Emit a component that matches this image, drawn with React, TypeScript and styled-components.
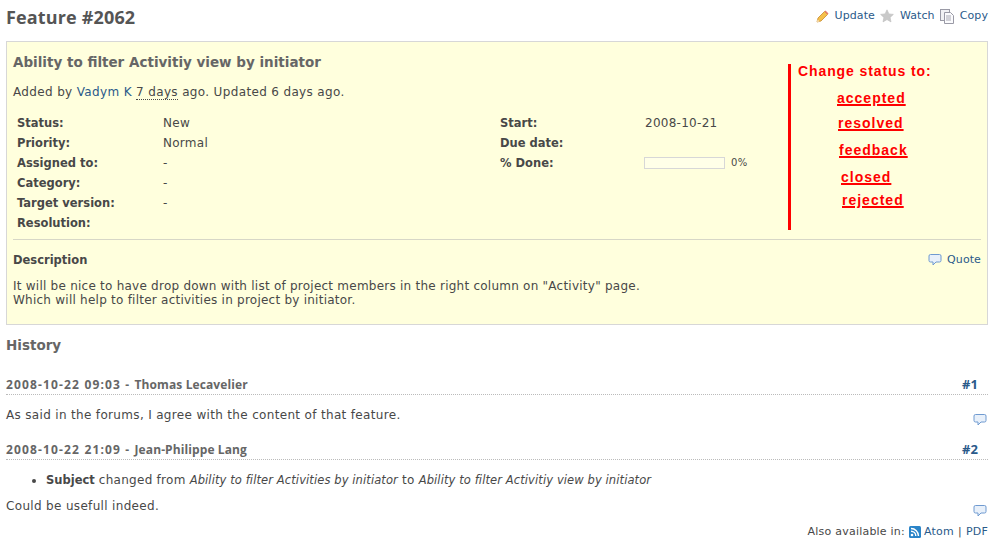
import React from "react";
import styled, { createGlobalStyle } from "styled-components";

const Global = createGlobalStyle`
  html, body { margin: 0; padding: 0; background: #fff; }
  body { font-family: "DejaVu Sans", Verdana, sans-serif; font-size: 12px; letter-spacing: 0.27px; color: #484848; line-height: 14px; }
  a { color: #2a5a8a; text-decoration: none; }
`;

const Page = styled.div`
  width: 998px;
  height: 542px;
  box-sizing: border-box;
  padding: 0 10px 0 6px;
  overflow: hidden;
`;
const TitleRow = styled.div`
  display: flex;
  justify-content: space-between;
  height: 41px;
`;
const Title = styled.h2`
  margin: 6px 0 0;
  font: bold 18px/23px "Open Sans", "DejaVu Sans", sans-serif;
  letter-spacing: 0.15px;
  color: #555;
`;
const Actions = styled.div`
  display: flex;
  align-items: center;
  height: 14px;
  margin-top: 9px;
  font-size: 11px;
  letter-spacing: 0.1px;
`;
const ActionLink = styled.a`
  display: flex;
  align-items: center;
  gap: 6px;
  margin-left: 5px;
`;
const IssueBox = styled.div`
  position: relative;
  box-sizing: border-box;
  height: 284px;
  background: #ffffdd;
  border: 1px solid #d7d7d7;
  padding: 0 6px;
`;
const Subject = styled.h3`
  margin: 12px 0 0;
  font: bold 13.5px/16px "DejaVu Sans", sans-serif;
  color: #666;
  letter-spacing: 0;
`;
const Author = styled.p`
  margin: 15px 0 0;
  height: 14px;
  letter-spacing: 0.35px;
`;
const Abbr = styled.span`
  border-bottom: 1px dotted #484848;
`;
const Attributes = styled.div`
  display: grid;
  grid-template-columns: 146px 337px 145px 1fr;
  grid-auto-rows: 20px;
  margin: 14px 0 0 4px;
  width: 760px;
  align-items: center;
`;
const Label = styled.span`
  font-weight: bold;
  font-size: 11.5px;
  letter-spacing: 0;
  white-space: nowrap;
`;
const Value = styled.span`
  white-space: nowrap;
`;
const ProgressCell = styled.span`
  display: flex;
  align-items: center;
  gap: 6px;
  margin-left: -1px;
  font-size: 10px;
`;
const Progress = styled.span`
  box-sizing: border-box;
  width: 81px;
  height: 12px;
  border: 1px solid #d7d7d7;
  background: #ffffe8;
`;
const Rule = styled.hr`
  border: 0;
  height: 1px;
  background: #d7d7c7;
  margin: 6px 0 0;
`;
const DescHead = styled.div`
  display: flex;
  justify-content: space-between;
  align-items: center;
  margin-top: 13px;
  height: 14px;
`;
const DescTitle = styled.strong`
  font-weight: bold;
  font-size: 11.5px;
  letter-spacing: 0;
`;
const QuoteLink = styled.a`
  display: flex;
  align-items: center;
  gap: 5px;
  font-size: 11px;
  letter-spacing: 0.1px;
`;
const DescText = styled.p`
  margin: 12px 0 0;
  white-space: nowrap;
  letter-spacing: 0.24px;
`;
const Annotation = styled.div`
  position: absolute;
  left: 781px;
  top: 22px;
  width: 190px;
  height: 166px;
  color: #ff0000;
  font-family: "Liberation Sans", Arial, sans-serif;
  font-weight: bold;
  font-size: 14px;
`;
const RedBar = styled.div`
  position: absolute;
  left: 0;
  top: 0;
  width: 3px;
  height: 166px;
  background: #ff0000;
`;
const AnnotationTitle = styled.div`
  position: absolute;
  left: 10px;
  top: 0;
  letter-spacing: 0.9px;
  white-space: nowrap;
`;
const StatusLink = styled.span<{ $x: number; $y: number }>`
  position: absolute;
  left: ${(p) => p.$x}px;
  top: ${(p) => p.$y}px;
  text-decoration: underline;
  text-decoration-thickness: 2px;
  letter-spacing: 1px;
`;
const History = styled.h3`
  margin: 11px 0 0;
  font: bold 13.5px/18px "DejaVu Sans", sans-serif;
  color: #666;
  letter-spacing: 0;
`;
const JournalHead = styled.h4<{ $top: number }>`
  display: flex;
  justify-content: space-between;
  box-sizing: border-box;
  height: 18px;
  margin: ${(p) => p.$top}px 0 0;
  padding-right: 10px;
  border-bottom: 1px dotted #bbb;
  font: bold 12px/16px "Open Sans", "DejaVu Sans", sans-serif;
  letter-spacing: 0.1px;
  color: #666;
`;
const JournalNum = styled.a`
  font-size: 13px;
  line-height: 14px;
`;
const JournalDate = styled.span`
  letter-spacing: 1.15px;
`;
const JournalBody = styled.div`
  position: relative;
`;
const Note = styled.p<{ $top: number }>`
  margin: ${(p) => p.$top}px 0 0;
  height: 14px;
  letter-spacing: 0.33px;
`;
const Details = styled.ul`
  margin: 13px 0 0;
  padding: 0 0 0 40px;
  height: 14px;
  white-space: nowrap;
`;
const SubjectLabel = styled.strong`
  font-size: 11.5px;
  letter-spacing: 0;
`;
const Speech = styled.span`
  position: absolute;
  right: 1px;
  bottom: -5px;
  line-height: 0;
`;
const Footer = styled.div`
  display: flex;
  justify-content: flex-end;
  align-items: center;
  gap: 4px;
  margin-top: 12px;
  font-size: 11px;
  letter-spacing: 0.22px;
`;
const RssWrap = styled.span`
  display: flex;
  margin-right: -1px;
`;
const Em = styled.em`
  font-style: italic;
  font-size: 11.5px;
  letter-spacing: 0.1px;
`;

const SpeechIcon = () => (
  <svg width="14" height="14" viewBox="0 0 14 14">
    <path d="M2.5 1.5h9a1.5 1.5 0 0 1 1.5 1.5v4.5a1.5 1.5 0 0 1-1.5 1.5H8L5 12V9H2.5A1.5 1.5 0 0 1 1 7.5V3a1.5 1.5 0 0 1 1.5-1.5z" fill="#e8f0fa" stroke="#6f9ad0" strokeWidth="1" />
  </svg>
);
const Pencil = () => (
  <svg width="13" height="13" viewBox="0 0 13 13">
    <path d="M1 12l1-4 6.5-6.5 3 3L5 11z" fill="#f5c04a" stroke="#c88a30" strokeWidth="0.8" />
    <path d="M8.5 1.5l1-1 3 3-1 1z" fill="#e87a6a" />
    <path d="M1 12l.6-2.6 2 2z" fill="#f8e4c0" />
  </svg>
);
const Star = () => (
  <svg width="14" height="14" viewBox="0 0 14 14">
    <path d="M7 .8l1.9 4.1 4.5.5-3.3 3 .9 4.5L7 10.6 3 12.9l.9-4.5-3.3-3 4.5-.5z" fill="#c9c9c9" stroke="#bdbdbd" strokeWidth="0.6" />
  </svg>
);
const CopyIcon = () => (
  <svg width="14" height="15" viewBox="0 0 14 15">
    <rect x="0.5" y="0.5" width="9" height="11" fill="#f1f1f4" stroke="#9a9aa6" />
    <path d="M4.5 3.5h6l3 3v8h-9z" fill="#fbfbfd" stroke="#9a9aa6" />
    <path d="M6 7h5M6 9h5M6 11h5" stroke="#a9a9b4" />
  </svg>
);
const Rss = () => (
  <svg width="12" height="12" viewBox="0 0 12 12">
    <rect width="12" height="12" rx="1.5" fill="#2a84c8" />
    <circle cx="3" cy="9" r="1.3" fill="#fff" />
    <path d="M2 5.2A4.8 4.8 0 0 1 6.8 10M2 2.5A7.5 7.5 0 0 1 9.5 10" fill="none" stroke="#fff" strokeWidth="1.4" />
  </svg>
);

const attrs: [string, string, string?, string?][] = [
  ["Status:", "New", "Start:", "2008-10-21"],
  ["Priority:", "Normal", "Due date:", ""],
  ["Assigned to:", "-", "% Done:", "progress"],
  ["Category:", "-"],
  ["Target version:", "-"],
  ["Resolution:", ""],
];

const statuses: [string, number, number][] = [
  ["accepted", 49, 27],
  ["resolved", 50, 52],
  ["feedback", 51, 79],
  ["closed", 53, 106],
  ["rejected", 54, 129],
];

export default function App() {
  return (
    <Page>
      <Global />
      <TitleRow>
        <Title>Feature #2062</Title>
        <Actions>
          <ActionLink href="#"><Pencil />Update</ActionLink>
          <ActionLink href="#"><Star />Watch</ActionLink>
          <ActionLink href="#"><CopyIcon />Copy</ActionLink>
        </Actions>
      </TitleRow>
      <IssueBox>
        <Subject>Ability to filter Activitiy view by initiator</Subject>
        <Author>
          Added by <a href="#">Vadym K</a> <Abbr>7 days</Abbr> ago. Updated 6 days ago.
        </Author>
        <Attributes>
          {attrs.map(([a, b, c, d]) => (
            <React.Fragment key={a}>
              <Label>{a}</Label>
              <Value>{b}</Value>
              <Label>{c ?? ""}</Label>
              {d === "progress" ? (
                <ProgressCell><Progress />0%</ProgressCell>
              ) : (
                <Value>{d ?? ""}</Value>
              )}
            </React.Fragment>
          ))}
        </Attributes>
        <Rule />
        <DescHead>
          <DescTitle>Description</DescTitle>
          <QuoteLink href="#"><SpeechIcon />Quote</QuoteLink>
        </DescHead>
        <DescText>
          It will be nice to have drop down with list of project members in the right column on "Activity" page.
          <br />
          Which will help to filter activities in project by initiator.
        </DescText>
        <Annotation>
          <RedBar />
          <AnnotationTitle>Change status to:</AnnotationTitle>
          {statuses.map(([s, x, y]) => (
            <StatusLink key={s} $x={x} $y={y}>{s}</StatusLink>
          ))}
        </Annotation>
      </IssueBox>
      <History>History</History>
      <JournalHead $top={23}>
        <span><JournalDate>2008-10-22 09:03 - </JournalDate>Thomas Lecavelier</span>
        <JournalNum href="#">#1</JournalNum>
      </JournalHead>
      <JournalBody>
        <Note $top={13}>As said in the forums, I agree with the content of that feature.</Note>
        <Speech><SpeechIcon /></Speech>
      </JournalBody>
      <JournalHead $top={20}>
        <span><JournalDate>2008-10-22 21:09 - </JournalDate>Jean-Philippe Lang</span>
        <JournalNum href="#">#2</JournalNum>
      </JournalHead>
      <JournalBody>
        <Details>
          <li>
            <SubjectLabel>Subject</SubjectLabel> changed from <Em>Ability to filter Activities by initiator</Em> to <Em>Ability to filter Activitiy view by initiator</Em>
          </li>
        </Details>
        <Note $top={12}>Could be usefull indeed.</Note>
        <Speech><SpeechIcon /></Speech>
      </JournalBody>
      <Footer>
        Also available in: <RssWrap><Rss /></RssWrap><a href="#">Atom</a><span>|</span><a href="#">PDF</a>
      </Footer>
    </Page>
  );
}
